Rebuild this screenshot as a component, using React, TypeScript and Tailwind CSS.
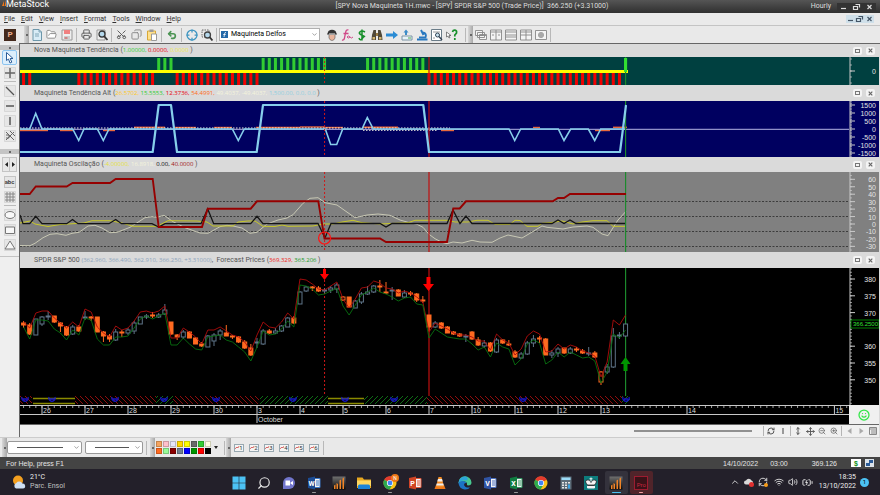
import type { ReactNode } from "react";
import {
  BatteryCharging,
  ChevronDown,
  ChevronUp,
  Copy,
  Crosshair,
  FolderOpen,
  Move,
  MoveVertical,
  Printer,
  RefreshCw,
  Scissors,
  Search,
  Smile,
  Undo2,
  Volume2,
  Wifi,
  ZoomIn,
  ZoomOut,
} from "lucide-react";

const BAR = 43 / 7;
const FIRST = -3;
const barX = (i: number) => 42 + i * BAR;

const DASHED_X = barX(46);
const CROSS_X = barX(63);
const LAST_X = barX(95);

function range(from: number, to: number): number[] {
  return Array.from({ length: to - from + 1 }, (_, k) => from + k);
}

const GREEN_BARS = [...range(19, 21), ...range(36, 46), ...range(53, 62), 95];
const RED_BARS = [-3, -2, ...range(6, 18), ...range(22, 35), ...range(63, 94)];

const TREND =
  "20,152 152.7,152 158.7,105 171,105 177,152 256.7,152 263,105 423.3,105 429,152 620,152 626,105";

const SPIKES =
  "20,129 29.7,129 35.7,113.5 42,129 72.7,129 78.7,140.5 84,129 97.3,129 103.3,140.5 109,129 232.3,129 238.3,140.5 244.3,129 325.3,129 330.7,144.5 336.7,144.5 342.7,129 362,129 367.3,117.5 373.3,129 509,129 514.7,140.5 520.7,129 558.3,129 564,140.5 570.7,129 588.3,129 594.7,140.5 600.7,129 626,129";

// x1, x2, y
const ORANGE_RUNS: [number, number, number][] = [
  [20, 48, 130.5],
  [60, 73, 130.5],
  [103, 115, 130.5],
  [134, 165, 127.3],
  [174, 196, 127.5],
  [214, 232, 127.5],
  [256, 300, 127.5],
  [300, 325, 127],
  [325, 343, 127.5],
  [363, 398, 127.3],
  [441, 454, 130.5],
  [533, 540, 127.5],
  [595, 610, 130.5],
  [613, 627, 127.3],
];

const OSC_RED =
  "20,194 29.7,194 35.8,186.5 66.7,186.5 72.5,183 110,183 115.7,179 152.7,179 158.7,227 202,227 207.7,208.7 250.7,208.7 257,201.3 318.3,201.3 324.5,238.5 380,238.5 386,242 447,242 453.3,208.5 459.7,208.5 466,201.3 552.7,201.3 558,198 564,198 570,194 626,194";

const OSC_BLACK =
  "20,215 23,223.7 29.7,223.7 35.8,216.3 42,223.7 66.7,223.7 72.5,219.5 78,223.7 109,223.7 115.7,219.5 121.5,223.7 152,223.7 158.7,227 165,223.7 201,223.7 207.7,209 213.7,223.7 250.7,223.7 257,216.3 263,223.7 318,223.5 325,238 331,223.5 380,223.5 386,227 392,223.5 447,223.5 453,210 460,223.5 466,216 472,223.5 552,223.5 558,220 564,223.5 570,220 576,223.5 626,223.5";

const OSC_YELLOW =
  "20,223 30,221 35,224 48,226.5 60,224.5 84,223 92,220.7 110,220.7 122,223 133,226.3 157,226.3 168,220.7 197,221 207,222 213,226 233,226 238,222 248,221 255,221 263,226.3 275,226.5 282,225 288,226.3 313,226 323,224 333,224 342,222 353,220.3 362,222.7 380,224 408,222.7 415,220.3 447,220.3 455,222 468,222 477,220.3 488,220.3 495,224.3 510,224.3 515,220.3 520,220.5 527,226.3 538,226.3 542,223.3 553,222.3 562,221 573,224 582,222 593,220.7 607,220.7 613,226.3 626,226.3";

const OSC_CREAM =
  "20,245.5 30,245.7 35,243.3 43,237.7 50,234.3 57,233.7 66,235.3 72,233.3 79,232.3 88,226 95,225.3 102,228 110,232.7 117,232.3 130,227.3 145,217.7 152,216.7 157,217.3 164,215.3 173,221.7 185,227.7 200,233 208,233.3 220,226.7 227,225.3 233,226 242,228 250,233.3 257,232.3 267,224 278,220 287,218 293,214.7 303,203.3 310,198.3 318,197.7 325,202.7 337,205 345,210.7 355,217.7 367,215 378,214 390,215.3 400,220 408,222.3 417,224.3 423,227.3 429,234.3 435,238.7 442,242.3 447,243.7 453,242 462,243 472,240.3 480,242 492,242.3 500,238 508,235 522,238 530,233.3 542,226 547,227.3 563,229 573,227 587,226 593,227.3 602,234 608,235.7 618,220 626,211.3";

type Kind = "d" | "u" | "x";
// high, top, bottom, low, kind (d = down, u = up, x = hollow down)
type Candle = [number, number, number, number, Kind];

const CANDLES: Candle[] = [
  [321, 323, 325, 328, "d"],
  [323, 325, 334, 335, "d"],
  [319, 319, 335, 335, "u"],
  [316, 317, 324, 326, "u"],
  [311, 316, 317, 320, "u"],
  [316, 316, 322, 323, "d"],
  [322, 323, 326, 332, "d"],
  [326, 327, 335, 336, "d"],
  [325, 327, 334, 335, "u"],
  [325, 327, 331, 332, "d"],
  [311, 317, 318, 320, "u"],
  [316, 317, 318, 321, "d"],
  [317, 317, 332, 332, "d"],
  [331, 332, 336, 342, "d"],
  [334, 336, 339, 342, "d"],
  [329, 332, 340, 341, "u"],
  [330, 332, 333, 337, "d"],
  [328, 330, 333, 335, "u"],
  [321, 323, 331, 334, "u"],
  [317, 317, 324, 324, "u"],
  [314, 316, 317, 319, "u"],
  [312, 315, 316, 318, "d"],
  [313, 315, 317, 318, "u"],
  [304, 310, 314, 315, "u"],
  [322, 322, 334, 335, "d"],
  [334, 335, 337, 340, "d"],
  [330, 332, 337, 339, "u"],
  [331, 332, 338, 338, "d"],
  [337, 338, 344, 344, "d"],
  [342, 344, 346, 347, "d"],
  [335, 336, 347, 347, "u"],
  [333, 335, 341, 346, "u"],
  [329, 331, 335, 340, "u"],
  [325, 333, 336, 336, "d"],
  [335, 336, 337, 339, "d"],
  [336, 337, 342, 343, "d"],
  [340, 342, 348, 349, "d"],
  [344, 348, 355, 356, "d"],
  [338, 342, 343, 348, "u"],
  [329, 331, 344, 345, "u"],
  [329, 331, 333, 334, "d"],
  [328, 331, 333, 334, "u"],
  [325, 326, 331, 332, "u"],
  [317, 318, 327, 327, "u"],
  [316, 318, 323, 324, "d"],
  [291, 292, 304, 304, "u"],
  [286, 287, 291, 292, "u"],
  [286, 287, 288, 291, "d"],
  [286, 288, 291, 292, "d"],
  [288, 290, 291, 293, "u"],
  [286, 288, 290, 293, "u"],
  [283, 285, 289, 293, "u"],
  [296, 297, 300, 301, "x"],
  [297, 297, 307, 308, "d"],
  [300, 301, 308, 308, "u"],
  [292, 294, 302, 304, "u"],
  [286, 292, 294, 295, "u"],
  [285, 286, 292, 293, "u"],
  [280, 286, 287, 292, "d"],
  [282, 292, 293, 294, "x"],
  [287, 290, 291, 300, "u"],
  [289, 290, 296, 296, "d"],
  [290, 293, 297, 298, "u"],
  [291, 293, 294, 296, "d"],
  [293, 294, 300, 302, "d"],
  [296, 300, 301, 303, "d"],
  [315, 315, 327, 331, "d"],
  [321, 323, 327, 328, "u"],
  [322, 323, 328, 329, "d"],
  [326, 327, 333, 333, "d"],
  [331, 332, 334, 335, "d"],
  [333, 334, 336, 337, "d"],
  [334, 336, 337, 342, "u"],
  [331, 332, 339, 340, "d"],
  [337, 340, 345, 346, "d"],
  [340, 343, 346, 348, "u"],
  [342, 343, 351, 352, "d"],
  [338, 340, 352, 353, "u"],
  [339, 340, 343, 344, "d"],
  [340, 344, 345, 346, "d"],
  [350, 352, 357, 358, "d"],
  [352, 354, 358, 359, "u"],
  [341, 343, 354, 355, "u"],
  [335, 339, 343, 347, "u"],
  [336, 338, 339, 343, "d"],
  [338, 339, 355, 355, "d"],
  [350, 353, 355, 358, "u"],
  [347, 349, 353, 357, "u"],
  [348, 348, 353, 354, "d"],
  [347, 349, 353, 354, "u"],
  [347, 349, 350, 352, "d"],
  [349, 351, 353, 354, "d"],
  [347, 353, 354, 356, "u"],
  [351, 353, 357, 358, "d"],
  [371, 372, 382, 385, "x"],
  [364, 367, 372, 374, "u"],
  [328, 336, 367, 368, "u"],
  [332, 335, 336, 339, "u"],
  [324, 324, 336, 337, "u"],
];

const FORECAST_HIGH = [
  322, 328, 313, 311, 311, 318, 323, 328, 322, 327, 309, 312, 327, 333, 337, 326, 330, 328, 321, 312,
  311, 313, 311, 306, 338, 338, 328, 332, 337, 344, 330, 330, 327, 331, 335, 337, 342, 351, 335, 322,
  327, 328, 322, 313, 319, 279, 280, 284, 289, 290, 286, 282, 299, 308, 299, 288, 287, 281, 283, 288,
  289, 293, 291, 293, 297, 302, 332, 323, 326, 329, 333, 335, 335, 337, 341, 341, 350, 334, 340, 343,
  355, 349, 336, 331, 334, 352, 351, 344, 349, 345, 347, 351, 353, 356, 377, 362, 320, 325, 315,
];

const FORECAST_LOW = [
  327, 339, 320, 320, 321, 329, 333, 340, 330, 335, 318, 320, 339, 345, 345, 337, 337, 336, 328, 319,
  316, 319, 316, 313, 345, 345, 338, 344, 349, 350, 337, 336, 335, 340, 342, 347, 352, 361, 347, 331,
  335, 334, 329, 321, 327, 285, 286, 289, 295, 294, 291, 288, 306, 315, 305, 295, 292, 288, 292, 294,
  297, 301, 298, 297, 304, 305, 338, 329, 333, 337, 338, 339, 339, 344, 350, 347, 357, 343, 347, 349,
  365, 359, 344, 340, 343, 364, 360, 352, 357, 352, 355, 358, 357, 361, 383, 372, 334, 338, 330,
];

const toPoints = (ys: number[]) => ys.map((y, k) => `${barX(k + FIRST)},${y}`).join(" ");

// start, end, kind
const RIBBON: [number, number, "red" | "green" | "flat"][] = [
  [20, 32, "red"],
  [33, 75, "flat"],
  [75, 156, "red"],
  [156, 173, "green"],
  [173, 259, "red"],
  [260, 328, "green"],
  [328, 364, "flat"],
  [364, 427, "green"],
  [427, 622, "red"],
  [622, 630, "green"],
];

const EXPERT_MARKS = [25, 52, 115, 164, 216, 293, 345, 394, 523, 626];

const DAYS: [number, string][] = [
  [0, "26"],
  [7, "27"],
  [14, "28"],
  [21, "29"],
  [28, "30"],
  [35, "3"],
  [42, "4"],
  [49, "5"],
  [56, "6"],
  [63, "7"],
  [70, "10"],
  [77, "11"],
  [84, "12"],
  [91, "13"],
  [105, "14"],
  [129, "15"],
];

interface PlotProps {
  top: number;
  className: string;
  label: string;
  children: ReactNode;
}

const Plot = ({ top, className, label, children }: PlotProps) => (
  <svg role="img" aria-label={label} className={`block min-w-0 flex-1 ${className}`}>
    <g transform={`translate(-20 ${-top})`}>{children}</g>
  </svg>
);

const Cursors = ({ y1, y2 }: { y1: number; y2: number }) => (
  <g>
    <line x1={DASHED_X} x2={DASHED_X} y1={y1} y2={y2} stroke="#d01818" strokeDasharray="2 2" />
    <line x1={CROSS_X} x2={CROSS_X} y1={y1} y2={y2} stroke="#c01010" strokeWidth="1.2" />
    <line x1={LAST_X} x2={LAST_X} y1={y1} y2={y2} stroke="#1c8a2c" strokeWidth="1.2" />
  </g>
);

interface ScaleProps {
  top: number;
  height: number;
  className: string;
  marks: [number, string][];
  minor: number;
  children?: ReactNode;
}

const Scale = ({ top, height, className, marks, minor, children }: ScaleProps) => {
  const count = Math.floor(height / minor);
  const start = marks[0][0] - Math.floor((marks[0][0] - top) / minor) * minor;
  return (
    <svg aria-hidden="true" className={`block w-[30px] shrink-0 ${className}`}>
      <g transform={`translate(0 ${-top})`} stroke="#c8c8c8">
        <line x1="1" x2="1" y1={top} y2={top + height} />
        {range(0, count).map((k) => (
          <line key={k} x1="1" x2="3" y1={start + k * minor} y2={start + k * minor} strokeWidth="0.7" />
        ))}
        {marks.map(([y]) => (
          <line key={y} x1="1" x2="6" y1={y} y2={y} />
        ))}
        {marks.map(([y, text]) => (
          <text
            key={y}
            x="27"
            y={y + 3}
            textAnchor="end"
            stroke="none"
            fill="#e4e4e4"
            className="font-['Liberation_Sans'] text-[7px]"
          >
            {text}
          </text>
        ))}
        {children}
      </g>
    </svg>
  );
};

const CloseGlyph = () => (
  <svg viewBox="0 0 5 5" className="h-[5px] w-[5px]">
    <path d="M.7 .7 4.3 4.3M4.3 .7 .7 4.3" stroke="#666" strokeWidth="1.2" />
  </svg>
);

const PaneHeader = ({ className = "h-[13px]", children }: { className?: string; children: ReactNode }) => (
  <div className={`flex items-center bg-[#dadada] pl-3.5 pr-1 text-[7px] leading-none text-[#555] ${className}`}>
    <h2 className="whitespace-pre">{children}</h2>
    <div className="ml-auto flex gap-1">
      <button aria-label="Maximize pane" className="flex h-2 w-[9px] items-center justify-center rounded-xs bg-[#f4f4f4]">
        <span className="h-1 w-[5px] border border-[#777]" />
      </button>
      <button aria-label="Close pane" className="flex h-2 w-[9px] items-center justify-center rounded-xs bg-[#f4f4f4]">
        <CloseGlyph />
      </button>
    </div>
  </div>
);

const Value = ({ className, children }: { className: string; children: ReactNode }) => (
  <span className={`font-[Open_Sans,Noto_Sans,sans-serif] text-[6px] font-medium ${className}`}>{children}</span>
);

const Candlesticks = () => (
  <g>
    {CANDLES.map(([high, top, bottom, low, kind], k) => {
      const x = barX(k + FIRST);
      const color = kind === "u" ? "#5f7488" : "#ff6a20";
      return (
        <g key={k} stroke={color}>
          <line x1={x} x2={x} y1={high} y2={top} />
          <line x1={x} x2={x} y1={bottom} y2={low} />
          <rect x={x - 2} y={top} width="4" height={bottom - top} fill={kind === "d" ? "#ff6a20" : "#000"} />
        </g>
      );
    })}
  </g>
);

const Ribbon = () => (
  <g>
    <defs>
      <pattern id="hatchRed" width="5" height="8" patternUnits="userSpaceOnUse" y="396">
        <path d="M-5 0 3 8M0 0 8 8M-10 0-2 8M5 0 13 8" stroke="#a01010" strokeWidth="0.9" />
      </pattern>
      <pattern id="hatchGreen" width="5" height="8" patternUnits="userSpaceOnUse" y="396">
        <path d="M3 0-5 8M8 0 0 8M13 0 5 8" stroke="#107818" strokeWidth="0.9" />
      </pattern>
    </defs>
    {RIBBON.map(([a, b, kind]) =>
      kind === "flat" ? (
        <path key={a} d={`M${a} 398.5H${b}M${a} 403.5H${b}`} stroke="#8a8a00" strokeWidth="1.4" />
      ) : (
        <rect
          key={a}
          x={a}
          y="396"
          width={b - a}
          height="8"
          fill={kind === "red" ? "url(#hatchRed)" : "url(#hatchGreen)"}
        />
      )
    )}
    {EXPERT_MARKS.map((x) => (
      <path key={x} d={`M${x - 3} 397a3.2 3.2 0 1 0 6 0M${x - 2} 399h4`} fill="none" stroke="#1414c8" strokeWidth="1.3" />
    ))}
  </g>
);

const TimeAxis = () => (
  <svg role="img" aria-label="Time axis" className="block h-[19px] min-w-0 flex-1 bg-black">
    <line x1="0" x2="100%" y1="0.5" y2="0.5" stroke="#c8c8c8" />
    <line x1="0" x2="100%" y1="9.5" y2="9.5" stroke="#c8c8c8" />
    <g
      transform="translate(-20 -405)"
      stroke="#c8c8c8"
      className="font-['Liberation_Sans'] text-[7px]"
    >
      {range(-3, 131).map((i) => (
        <line key={i} x1={barX(i)} x2={barX(i)} y1="406" y2="408" strokeWidth="0.8" />
      ))}
      {DAYS.map(([i, text]) => (
        <g key={text}>
          <line x1={barX(i)} x2={barX(i)} y1="405" y2="414" />
          <text x={barX(i) + 1} y="412.5" stroke="none" fill="#dcdcdc">
            {text}
          </text>
        </g>
      ))}
      <line x1={barX(35)} x2={barX(35)} y1="414" y2="423" />
      <text x={barX(35) + 1} y="422" stroke="none" fill="#dcdcdc">
        October
      </text>
    </g>
  </svg>
);

const TREND_MARKS: [number, string][] = [
  [105, "1500"],
  [113, "1000"],
  [121, "500"],
  [129, "0"],
  [137, "-500"],
  [145, "-1000"],
  [153, "-1500"],
];

const OSC_MARKS: [number, string][] = range(0, 9).map((k) => [179.3 + k * 7.45, String(60 - k * 10)]);

const PRICE_MARKS: [number, string][] = [
  [279, "380"],
  [295.8, "375"],
  [312.6, "370"],
  [346.2, "360"],
  [363, "355"],
  [379.8, "350"],
];

const MiniButton = ({ label, children }: { label: string; children: ReactNode }) => (
  <button aria-label={label} className="flex h-3 w-3 shrink-0 items-center justify-center">
    {children}
  </button>
);

const Divider = () => <span className="mx-px h-2.5 w-px shrink-0 bg-[#b4b4b4]" />;

const Charts = () => (
  <main className="flex min-w-0 flex-1 flex-col border-l border-t border-[#666] bg-[#dadada] pr-px">
    <section>
      <PaneHeader>
        Nova Maquineta Tendência (<Value className="text-[#32cd32]">1.00000, </Value>
        <Value className="text-red-600">0.0000, </Value>
        <Value className="text-[#f0ea50]">0.0000 </Value>)
      </PaneHeader>
      <div className="flex">
        <Plot top={57} className="h-7 bg-[#004040]" label="Nova Maquineta Tendência">
          {GREEN_BARS.map((i) => (
            <rect key={i} x={barX(i) - 1.5} y="58" width="3" height="12" fill="#32cd32" />
          ))}
          {RED_BARS.map((i) => (
            <rect key={i} x={barX(i) - 1.5} y="73" width="3" height="12" fill="#f00000" />
          ))}
          <rect x="20" y="70" width="608" height="3" fill="#ffff00" />
          <Cursors y1={57} y2={85} />
          <rect x={LAST_X - 1.5} y="58" width="3" height="14" fill="#32e032" />
        </Plot>
        <Scale top={57} height={28} minor={6} className="h-7 bg-[#004040]" marks={[[71, "0"]]} />
      </div>
    </section>

    <section>
      <PaneHeader className="h-4">
        Maquineta Tendência Alt (<Value className="text-[#ffc81e]">26.5702, </Value>
        <Value className="text-[#32cd32]">15.5553, </Value>
        <Value className="text-red-600">12.3736, </Value>
        <Value className="text-[#ff6a20]">54.4991, </Value>
        <Value className="text-[#f4f4dc]">49.4037, -49.4037, </Value>
        <Value className="text-[#90cfe0]">1,500.00, 0.0, 0.0 </Value>)
      </PaneHeader>
      <div className="flex">
        <Plot top={101} className="h-14 bg-[#000060]" label="Maquineta Tendência Alt">
          {ORANGE_RUNS.map(([a, b, y]) => (
            <line key={a} x1={a} x2={b} y1={y} y2={y} stroke="#e8683c" strokeWidth="1.4" />
          ))}
          <line x1="20" x2="4000" y1="129.3" y2="129.3" stroke="#b4b4e4" />
          <line x1="20" x2="450" y1="128" y2="128" stroke="#f0f0e0" strokeDasharray="1.5 1.5" />
          <line x1="363" x2="438" y1="130.3" y2="130.3" stroke="#f0f0e0" strokeDasharray="1.5 1.5" />
          <polyline points={SPIKES} fill="none" stroke="#87ceeb" strokeWidth="1.6" />
          <Cursors y1={101} y2={157} />
          <polyline points={TREND} fill="none" stroke="#87ceeb" strokeWidth="2.2" strokeLinejoin="round" />
        </Plot>
        <Scale top={101} height={56} minor={1.6} className="h-14 bg-[#000060]" marks={TREND_MARKS} />
      </div>
    </section>

    <section>
      <PaneHeader className="h-[15px]">
        Maquineta Oscilação (<Value className="text-[#e6e23c]">-4.00000, </Value>
        <Value className="text-[#f4f4dc]">16.8918, </Value>
        <Value className="text-black">0.00, </Value>
        <Value className="text-[#a01414]">40.0000 </Value>)
      </PaneHeader>
      <div className="flex">
        <Plot top={172} className="h-20 bg-[#808080]" label="Maquineta Oscilação">
          {[201.5, 216.5, 231.5, 246.5].map((y) => (
            <line key={y} x1="20" x2="4000" y1={y} y2={y} stroke="#3c3c3c" strokeDasharray="2 1.5" />
          ))}
          <polyline points={OSC_CREAM} fill="none" stroke="#c8c8b4" />
          <polyline points={OSC_YELLOW} fill="none" stroke="#c8c828" />
          <polyline points={OSC_BLACK} fill="none" stroke="#141414" strokeWidth="1.3" />
          <Cursors y1={172} y2={252} />
          <polyline points={OSC_RED} fill="none" stroke="#960000" strokeWidth="1.9" />
          <circle cx={DASHED_X} cy="238" r="6" fill="none" stroke="#ff1414" strokeWidth="1.2" />
        </Plot>
        <Scale top={172} height={80} minor={3.725} className="h-20 bg-[#808080]" marks={OSC_MARKS} />
      </div>
    </section>

    <section>
      <PaneHeader className="h-4">
        SPDR S&amp;P 500 <Value className="text-[#8ca4bc]">(362.960, 366.490, 362.910, 366.250, +3.31000)</Value>,
        {"  "}Forecast Prices (<Value className="text-[#f02020]">369.329, </Value>
        <Value className="text-[#209828]">365.206 </Value>)
      </PaneHeader>
      <div className="flex">
        <Plot top={268} className="h-[137px] bg-black" label="SPDR S&P 500">
          <Cursors y1={268} y2={396} />
          <Candlesticks />
          <polyline points={toPoints(FORECAST_HIGH)} fill="none" stroke="#b00c0c" strokeWidth="0.9" />
          <polyline points={toPoints(FORECAST_LOW)} fill="none" stroke="#087010" strokeWidth="0.9" />
          <path d="M323 269h3v5h3l-4.500 6-4.500-6h3z" fill="#ff0000" />
          <path d="M426.500 277h4v7h3.500l-5.500 7-5.500-7h3.500z" fill="#ff0000" />
          <path d="M623.500 371h4v-7h3l-5-7-5 7h3z" fill="#009600" />
          <Ribbon />
        </Plot>
        <Scale top={268} height={137} minor={3.36} className="h-[137px] bg-black" marks={PRICE_MARKS}>
          <rect x="2" y="320" width="28" height="8" fill="#000" stroke="#00a000" strokeWidth="0.8" />
          <text
            x="4"
            y="326"
            stroke="none"
            fill="#30e030"
            className="font-['Liberation_Sans'] text-[6px]"
          >
            366.2500
          </text>
        </Scale>
      </div>
      <div className="flex border-b border-[#666] bg-black">
        <TimeAxis />
        <div className="flex w-[30px] items-center justify-center bg-[#f0f0f0] text-[#32e646]">
          <Smile size={12} strokeWidth={2.5} />
        </div>
      </div>
    </section>

    <div className="flex h-3 items-center bg-[#f0f0f0] text-[#555]">
      <div className="ml-auto mr-2.5 h-0.5 w-[118px] bg-[#909090]" />
      <Divider />
      <MiniButton label="Refresh"><RefreshCw size={8} strokeWidth={3} /></MiniButton>
      <MiniButton label="Bar width"><span className="h-1.5 w-0.5 bg-[#999]" /></MiniButton>
      <Divider />
      <MiniButton label="Stretch"><MoveVertical size={8} strokeWidth={3} /></MiniButton>
      <MiniButton label="Move"><Move size={9} strokeWidth={2.5} /></MiniButton>
      <MiniButton label="Zoom out"><ZoomOut size={8} /></MiniButton>
      <MiniButton label="Zoom in"><ZoomIn size={8} /></MiniButton>
      <Divider />
      <MiniButton label="Previous">
        <svg viewBox="0 0 5 6" className="h-1.5 w-[5px]"><path d="M4.500 0v6L.5 3z" fill="#aaa" /></svg>
      </MiniButton>
      <MiniButton label="Next">
        <svg viewBox="0 0 5 6" className="h-1.5 w-[5px]"><path d="M.5 0v6l4-3z" fill="#aaa" /></svg>
      </MiniButton>
      <MiniButton label="Data window">
        <svg viewBox="0 0 8 8" className="size-2"><path d="M.5.5h7v7h-7zM0 2h8M2 4h5M2 6h5" fill="none" stroke="#888" /></svg>
      </MiniButton>
    </div>
  </main>
);

const Grip = () => (
  <span className="flex h-full w-[5px] shrink-0 items-center justify-center bg-linear-to-r from-[#d8d8d8] to-[#a8a8a8]">
    <span className="size-0.5 bg-[#666]" />
  </span>
);

const ToolButton = ({ label, children }: { label: string; children: ReactNode }) => (
  <button aria-label={label} title={label} className="flex h-4 w-[15px] shrink-0 items-center justify-center text-[#555]">
    {children}
  </button>
);

const Sep = () => <span className="mx-0.5 h-3.5 w-px shrink-0 bg-[#b8b8b8]" />;

const icon = "size-3 shrink-0";

const DocIcon = () => (
  <svg viewBox="0 0 12 12" className={icon}>
    <path d="M2 .5h6l2.500 2.500v8.500H2z" fill="#d8ecf6" stroke="#6d97aa" />
    <path d="M8 .5V3h2.500M4 5h4M4 7h4" fill="none" stroke="#6d97aa" strokeWidth=".8" />
  </svg>
);

const SaveIcon = () => (
  <svg viewBox="0 0 12 12" className={icon}>
    <path d="M1 1h10v10H1z" fill="#eee" stroke="#999" />
    <path d="M3 1h6v4H3z" fill="#f08080" />
    <path d="M3 7h6v4H3z" fill="#ccc" />
    <path d="M3.500 9h3" stroke="#d04040" />
  </svg>
);

const PreviewIcon = () => (
  <svg viewBox="0 0 12 12" className={icon}>
    <path d="M1 1h8v10H1z" fill="#eee" stroke="#999" />
    <circle cx="6" cy="5" r="3" fill="#b4d8ec" stroke="#333" strokeWidth="1.3" />
    <path d="m8 7 3.500 4" stroke="#333" strokeWidth="1.8" />
  </svg>
);

const PasteIcon = () => (
  <svg viewBox="0 0 12 12" className={icon}>
    <path d="M1.500 2h8v9h-8z" fill="#ffe08c" stroke="#d8a838" />
    <path d="M3.500 .5h4v2.500h-4z" fill="#999" />
    <path d="M5.500 5h5v6.500h-5z" fill="#fff" stroke="#999" />
  </svg>
);

const ZoomBoxIcon = () => (
  <svg viewBox="0 0 12 12" className={icon}>
    <path d="M1 1h7v7H1z" fill="none" stroke="#666" strokeDasharray="1.5 1" />
    <circle cx="6.500" cy="6" r="3" fill="#b4d8ec" stroke="#444" strokeWidth="1.3" />
    <path d="m8.500 8 3 3.500" stroke="#333" strokeWidth="1.8" />
  </svg>
);

const ExpertIcon = () => (
  <svg viewBox="0 0 12 12" className={icon}>
    <path d="M3 5.500h6v3.500q-1 2.500-3 2.500t-3-2.500z" fill="#e8b49c" stroke="#555" strokeWidth=".6" />
    <path d="M1 5.500 2.500 2Q6-.5 9.500 2L11 5.500z" fill="#333" />
    <path d="M3 5h6" stroke="#eee" />
  </svg>
);

const FxIcon = () => (
  <svg viewBox="0 0 12 12" className={icon}>
    <path d="M7.500 1Q5 0 4.500 4L3.500 9Q3 11.500 1 11M2.500 4.500h5" fill="none" stroke="#d04888" strokeWidth="1.3" />
    <path d="M6 8q1.500-2 3 0t3 0M6 8q1.500 2 3 0" fill="none" stroke="#d04888" />
  </svg>
);

const DollarIcon = () => (
  <svg viewBox="0 0 12 12" className={icon}>
    <path d="M9 3Q6 1.200 4 2.800T5.500 6 8.500 7.500 6 9.800 3 9M6 .5v11" fill="none" stroke="#18902c" strokeWidth="1.5" />
  </svg>
);

const BinocularsIcon = () => (
  <svg viewBox="0 0 12 12" className={icon}>
    <path d="M1 6 2.500 1h2.500v10H.5zM11 6 9.500 1H7v10h4.500z" fill="#504838" />
    <path d="M5 4h2v3H5z" fill="#98783c" />
    <path d="M1.500 8h2.500v2.500H1.500zM8 8h2.500v2.500H8z" fill="#d4b46c" />
  </svg>
);

const ArrowIcon = () => (
  <svg viewBox="0 0 12 12" className={icon}>
    <path d="M0 4.500h7V2l5 4-5 4V7.500H0z" fill="#2c8cd4" />
  </svg>
);

const DownloadIcon = () => (
  <svg viewBox="0 0 12 12" className={icon}>
    <path d="M1 7h10v4H1z" fill="#e8f2f8" stroke="#7a94a4" />
    <path d="M4 6V3.500H2.500L5 .5l2.500 3H6V6z" fill="#3c8cc8" />
    <path d="M7 9h3" stroke="#52b04c" />
  </svg>
);

const MicroscopeIcon = () => (
  <svg viewBox="0 0 12 12" className={icon}>
    <path d="M5 1 7.500 6M7 3.500q4 1 2.500 5H3" fill="none" stroke="#2878c0" strokeWidth="1.900" />
    <path d="M1 10.500h10.500" stroke="#2878c0" strokeWidth="2" />
  </svg>
);

const ReportIcon = () => (
  <svg viewBox="0 0 12 12" className={icon}>
    <path d="M.5 .5h10v11H.5z" fill="#fff" stroke="#6a7c88" />
    <path d="M2 3h7M2 9h2" stroke="#999" />
    <circle cx="6.500" cy="6" r="2" fill="#cce4f0" stroke="#345" />
    <path d="m8 7.500 3 3.500" stroke="#345" strokeWidth="1.400" />
  </svg>
);

const HelpIcon = () => (
  <svg viewBox="0 0 12 12" className={icon}>
    <path d="M.5 3v5l1.500-1 1 2 1-.5-1-2h2z" fill="#fff" stroke="#555" strokeWidth=".7" />
    <path d="M6.500 3Q7 1 9 1.200T10.500 4L8.800 6v1.500M8.800 9v2" fill="none" stroke="#18902c" strokeWidth="1.700" />
  </svg>
);

const WINDOW_ICONS: [string, string][] = [
  ["Cascade", "M.5 1.500h7v5h-7zM2.500 3.500h7v5h-7zM4.500 5.500h7v5h-7zM5 6.500h6"],
  ["Tile columns", "M.5 1h11v10H.5zM6 1v10M.5 3h11M2 6h2M8 6h2"],
  ["Tile rows", "M.5 1h11v10H.5zM.5 6h11M.5 3h11M.5 8h11"],
  ["Tile grid", "M.5 1h11v10H.5zM6 1v10M.5 6h11M.5 3h11"],
  ["Arrange", "M.5 1.500h11v9H.5zM4 4h4v4H4zM6 3v6M3 6h6"],
];

const Toolbar = () => (
  <div className="flex h-[18px] items-center border-t border-[#c4c4c4] bg-[#e9e9e9] pl-1">
    <button aria-label="Power Console" className="mr-2 flex size-3 items-center justify-center bg-[#44291c] text-[8px] font-bold leading-none text-[#f0b090]">
      P
    </button>
    <Grip />
    <ToolButton label="New"><DocIcon /></ToolButton>
    <ToolButton label="Open"><FolderOpen size={11} fill="#fff" stroke="#888" /></ToolButton>
    <ToolButton label="Save"><SaveIcon /></ToolButton>
    <Sep />
    <ToolButton label="Print"><Printer size={11} /></ToolButton>
    <ToolButton label="Print preview"><PreviewIcon /></ToolButton>
    <Sep />
    <ToolButton label="Cut"><Scissors size={11} className="rotate-270" /></ToolButton>
    <ToolButton label="Copy"><Copy size={11} stroke="#888" className="-scale-x-100" /></ToolButton>
    <ToolButton label="Paste"><PasteIcon /></ToolButton>
    <Sep />
    <ToolButton label="Undo"><Undo2 size={10} stroke="#4c9454" strokeWidth={4} /></ToolButton>
    <Sep />
    <ToolButton label="Crosshair"><Crosshair size={12} stroke="#3c94c0" strokeWidth={2.5} /></ToolButton>
    <ToolButton label="Zoom box"><ZoomBoxIcon /></ToolButton>
    <Sep />
    <div className="relative mr-1 h-[13px] w-[101px] shrink-0">
      <select
        aria-label="Template"
        className="block h-[13px] w-full appearance-none border border-[#b0b0b0] bg-white pl-[11px] text-[7px] leading-[11px] text-black"
      >
        <option>Maquineta Delfos</option>
      </select>
      <svg viewBox="0 0 7 7" className="pointer-events-none absolute left-0.5 top-[3px] size-[7px]">
        <path d="M0 0h7v7H0z" fill="#2468a8" />
        <path d="M5 1.500Q3.800 1 3.500 3L3 6M2.200 3.500h2.500" fill="none" stroke="#fff" strokeWidth=".8" />
      </svg>
      <ChevronDown size={7} className="pointer-events-none absolute right-0.5 top-[3px] text-[#666]" />
    </div>
    <ToolButton label="Expert Advisor"><ExpertIcon /></ToolButton>
    <ToolButton label="Indicator Builder"><FxIcon /></ToolButton>
    <ToolButton label="System Tester"><DollarIcon /></ToolButton>
    <ToolButton label="Explorer"><BinocularsIcon /></ToolButton>
    <ToolButton label="Forecaster"><ArrowIcon /></ToolButton>
    <ToolButton label="Downloader"><DownloadIcon /></ToolButton>
    <ToolButton label="Research"><MicroscopeIcon /></ToolButton>
    <ToolButton label="Reports"><ReportIcon /></ToolButton>
    <ToolButton label="Context help"><HelpIcon /></ToolButton>
    <div className="ml-1 flex h-full items-center">
      <Sep />
      <Grip />
      {WINDOW_ICONS.map(([label, d]) => (
        <ToolButton key={label} label={label}>
          <svg viewBox="0 0 12 12" className={icon}>
            <path d={d} fill="#f4f4f4" stroke="#888" strokeWidth="0.9" />
          </svg>
        </ToolButton>
      ))}
      <Sep />
    </div>
  </div>
);

const SideButton = ({ label, active, children }: { label: string; active?: boolean; children: ReactNode }) => (
  <button
    aria-label={label}
    className={
      active
        ? "flex size-[15px] items-center justify-center rounded-xs border border-[#8cc4f0] bg-[#dceefc]"
        : "flex size-[15px] items-center justify-center"
    }
  >
    <svg viewBox="0 0 12 12" className="size-3">
      {!active && <path d="M.5 .5h11v11H.5z" fill="#e6e6e6" stroke="#cfcfcf" strokeWidth=".7" />}
      {children}
    </svg>
  </button>
);

const SideBar = () => (
  <aside className="flex w-[19px] shrink-0 flex-col items-center bg-[#efefef]">
    <span className="mt-0.5 flex h-[5px] w-full shrink-0 items-center justify-center bg-[#c4c4c4]">
      <span className="size-0.5 bg-[#666]" />
    </span>
    <SideButton label="Pointer" active>
      <path d="M2.500 .5v8l2-1.500 1.500 4 1.800-.8L6.200 6.500H9z" fill="#fff" stroke="#2c5c98" />
    </SideButton>
    <SideButton label="Crosshair"><path d="M6 1v10M1 6h10" stroke="#666" strokeWidth="1.500" /></SideButton>
    <span className="my-px h-px w-3 bg-[#bbb]" />
    <SideButton label="Trendline"><path d="m2 2 8 8" stroke="#555" strokeWidth="1.200" /></SideButton>
    <SideButton label="Horizontal line"><path d="M2 6h8" stroke="#555" strokeWidth="1.500" /></SideButton>
    <SideButton label="Vertical line"><path d="M6 2v8" stroke="#555" strokeWidth="1.500" /></SideButton>
    <SideButton label="Line studies">
      <path d="m2 2 8 8M10 2 2 10M6 1l5 5M2 5h3v3H2" fill="none" stroke="#666" />
    </SideButton>
    <span className="mt-1.5 flex h-[5px] w-full shrink-0 items-center justify-center bg-[#c4c4c4]">
      <span className="size-0.5 bg-[#666]" />
    </span>
    <div className="mt-[3px] flex h-[15px] w-[15px] border border-[#c4c4c4] bg-[#e8e8e8]">
      <button aria-label="Scroll left" className="flex flex-1 items-center justify-center border-r border-[#c4c4c4]">
        <svg viewBox="0 0 3 5" className="h-[5px] w-[3px]"><path d="M3 0v5L0 2.500z" fill="#222" /></svg>
      </button>
      <button aria-label="Scroll right" className="flex flex-1 items-center justify-center">
        <svg viewBox="0 0 3 5" className="h-[5px] w-[3px]"><path d="M0 0v5l3-2.500z" fill="#222" /></svg>
      </button>
    </div>
    <button aria-label="Text" className="mb-px mt-1 flex size-3 items-center justify-center border border-[#c4c4c4] bg-[#e6e6e6] text-[6px] font-bold leading-none text-[#444]">
      abc
    </button>
    <SideButton label="Grid"><path d="M3 1v10M6 1v10M9 1v10M1 3h10M1 6h10M1 9h10" stroke="#888" /></SideButton>
    <span className="my-px h-px w-3 bg-[#bbb]" />
    <SideButton label="Ellipse"><ellipse cx="6" cy="6" rx="5" ry="3.500" fill="#f8f8f8" stroke="#777" /></SideButton>
    <SideButton label="Rectangle"><path d="M1.500 3h9v6.500h-9z" fill="#f8f8f8" stroke="#777" /></SideButton>
    <SideButton label="Triangle"><path d="M6 2 11 10H1z" fill="#f8f8f8" stroke="#777" /></SideButton>
    <span className="mt-1 h-px w-full bg-[#c4c4c4]" />
  </aside>
);

const PALETTE = [
  "bg-[#f4a460]",
  "bg-[#ffc0cb]",
  "bg-[#e6e6fa]",
  "bg-[#ffd700]",
  "bg-[#ffff00]",
  "bg-[#696969]",
  "bg-[#32cd32]",
  "bg-[#ffffe0]",
  "bg-[#ff6a20]",
  "bg-[#98fb98]",
  "bg-[#8b0000]",
  "bg-[#708090]",
  "bg-[#0000ff]",
  "bg-[#009600]",
  "bg-[#ff0000]",
  "bg-[#000000]",
];

const LineSelect = ({ label, className, line }: { label: string; className: string; line: string }) => (
  <div className={`relative h-[13px] shrink-0 ${className}`}>
    <select aria-label={label} className="block h-[13px] w-full appearance-none rounded-xs border border-[#999] bg-white" />
    <span className={`pointer-events-none absolute left-2.5 top-1.5 h-px bg-[#555] ${line}`} />
    <ChevronDown size={7} className="pointer-events-none absolute right-0.5 top-[3px] text-[#666]" />
  </div>
);

const FormatBar = () => (
  <div className="flex h-5 items-center border-t border-[#ccc] bg-[#e9e9e9] pl-0.5">
    <Grip />
    <LineSelect label="Line style" className="w-[75px]" line="w-[46px]" />
    <LineSelect label="Line weight" className="ml-[3px] w-[58px]" line="w-[34px]" />
    <span className="mx-[3px] h-3.5 w-px bg-[#b8b8b8]" />
    <Grip />
    <div className="ml-px grid grid-cols-8 gap-px">
      {PALETTE.map((color) => (
        <button key={color} aria-label="Color" className={`size-1.5 border border-black/20 ${color}`} />
      ))}
    </div>
    <button aria-label="More colors" className="flex w-2.5 justify-center">
      <svg viewBox="0 0 4 3" className="h-[3px] w-1"><path d="M0 0h4L2 3z" fill="#222" /></svg>
    </button>
    <span className="ml-[3px] mr-px h-3.5 w-px bg-[#b8b8b8]" />
    <Grip />
    {range(1, 6).map((n) => (
      <ToolButton key={n} label={`Chart style ${n}`}>
        <span className="flex h-2 w-2.5 items-center border border-[#98a8b0] bg-[#f4f4f4] text-[6px] leading-none text-[#333]">
          <svg viewBox="0 0 5 5" className="size-[5px]">
            <path d="m0 4 2-2 1 1 2-2.500" fill="none" stroke="#d04848" />
          </svg>
          {n}
        </span>
      </ToolButton>
    ))}
    <Sep />
  </div>
);

const StatusBar = () => (
  <footer className="flex h-3 items-center bg-[#444] px-1.5 font-['Liberation_Sans'] text-[7px] leading-none text-[#e4e4e4]">
    <span>For Help, press F1</span>
    <span className="ml-auto">14/10/2022</span>
    <span className="ml-3">03:00</span>
    <span className="ml-6 mr-3.5">369.126</span>
    <span className="flex h-2 w-2.5 items-center justify-center bg-white font-bold text-[#109020]">$</span>
    <svg viewBox="0 0 9 8" className="ml-1 h-2 w-[9px]">
      <path d="M0 0h9v8H0z" fill="#dde4ea" />
      <path d="M4 1h4v3H4zM1 4h4v3H1z" fill="#2c5c98" />
    </svg>
  </footer>
);

const Windows = () => (
  <svg viewBox="0 0 14 14" className="size-3.5">
    <path d="M.5.5h6.200v6.200H.5zM7.300.5h6.200v6.200H7.300zM.5 7.300h6.200v6.200H.5zM7.300 7.300h6.200v6.200H7.300z" fill="#4cc2f4" />
  </svg>
);

const Chat = () => (
  <svg viewBox="0 0 14 14" className="size-3.5">
    <path d="M1 13V7a6 6 0 1 1 6 6z" fill="#7276cc" />
    <path d="M3.500 4.500h4.500v5H3.500zM8.500 6.500l2.500-1.500v4L8.500 7.500z" fill="#fff" />
  </svg>
);

const Office = ({ letter, fill, dark }: { letter: string; fill: string; dark: string }) => (
  <svg viewBox="0 0 14 14" className="size-3.5">
    <path d="M6 2.500h7v9H6z" fill="#f4f4f4" stroke={fill} />
    <path d="M9 5h3M9 7h3M9 9h3" stroke={fill} />
    <path d="M1 2l7-1.500v13L1 12z" fill={dark} />
    <text x="4.500" y="9.500" textAnchor="middle" fill="#fff" className="text-[7px] font-bold">
      {letter}
    </text>
  </svg>
);

const Meta = () => (
  <svg viewBox="0 0 14 14" className="size-3.5">
    <defs>
      <linearGradient id="metaBg" x1="0" x2="0" y1="0" y2="1">
        <stop offset="0" stopColor="#707070" />
        <stop offset="1" stopColor="#080808" />
      </linearGradient>
    </defs>
    <path d="M.5.5h13v13H.5z" fill="url(#metaBg)" />
    <path d="M2 13V9.500l1.500-1V13zM4.500 13V7L6 8v5zM7.500 13V4.500L9 3.500V13zM10.500 13V2.500L12 1.500V13z" fill="#f08428" />
  </svg>
);

const Folder = () => (
  <svg viewBox="0 0 14 14" className="size-3.5">
    <path d="M0 1.500h5.500L7 3.500h7V12H0z" fill="#e8a820" />
    <path d="M0 4.500h14V10H0z" fill="#ffd860" />
    <path d="M1 13V10q0-1.500 1.500-1.500h9q1.500 0 1.500 1.500v3z" fill="#1c84d8" />
  </svg>
);

const Chrome = ({ badge }: { badge?: boolean }) => (
  <svg viewBox="0 0 14 14" className="size-3.5 overflow-visible">
    <circle cx="7" cy="7" r="6.500" fill="#fbc116" />
    <path d="M7 7 1.300 3.700A6.500 6.500 0 0 1 12.700 3.700z" fill="#e33b2e" />
    <path d="M7 7 1.300 3.700A6.500 6.500 0 0 0 6.500 13.500L10 8z" fill="#2da94f" />
    <circle cx="7" cy="7" r="3.100" fill="#fff" />
    <circle cx="7" cy="7" r="2.400" fill="#4285f4" />
    {badge && (
      <>
        <circle cx="12" cy="2" r="4" fill="#ee7818" />
        <text x="12" y="4" textAnchor="middle" fill="#fff" className="text-[5px]">
          N
        </text>
      </>
    )}
  </svg>
);

const Vlc = () => (
  <svg viewBox="0 0 14 14" className="size-3.5">
    <path d="M1.500 13 3 9h8l1.500 4z" fill="#f07818" />
    <path d="M5.500 1h3L11 10.500Q7 12.500 3 10.500z" fill="#f48c24" />
    <path d="M5 3h4l.7 2.500H4.300zM3.700 7.500h6.600l.5 2H3.200z" fill="#eee" />
  </svg>
);

const Edge = () => (
  <svg viewBox="0 0 14 14" className="size-3.5">
    <path d="M.5 7a6.500 6.500 0 0 1 13-.5Q13.500 9.500 10 9.500 8.500 9.300 9 8 9 5.500 6 5.500 2 5.500.5 7z" fill="#48c890" />
    <path d="M.5 7.500A6.500 6.500 0 0 1 8 .6Q11 2 9 4.500 3 3.500.5 7.500z" fill="#2ca4d8" />
    <path d="M.5 7Q2 4.500 5.500 5 8 5.500 8.500 7 6 6.500 6 9q1 3 6 2.500-2 2.500-5.500 2Q1 12.500.5 7z" fill="#1c74c4" />
  </svg>
);

const Calculator = () => (
  <svg viewBox="0 0 14 14" className="size-3.5">
    <path d="M1.500.5h11v13h-11z" fill="#5c6c78" />
    <path d="M2.500 1.500h9V4h-9z" fill="#9cdcf8" />
    <path d="M3 6h2v1.500H3zM6 6h2v1.500H6zM9 6h2v1.500H9zM3 8.500h2V10H3zM6 8.500h2V10H6zM3 11h2v1.500H3zM6 11h2v1.500H6z" fill="#e4e4e4" />
    <path d="M9 8.500h2v4H9z" fill="#3ca4e4" />
  </svg>
);

const Chess = () => (
  <svg viewBox="0 0 14 14" className="size-3.5">
    <path d="M0 0h14v14H0z" fill="#0c7c7c" />
    <path d="M3.500 9Q0 5 3 4t4 2.500Q8 3 11 4t-.5 5z" fill="#f4f4f4" stroke="#111" strokeWidth=".7" />
    <path d="M7 1.500v4M5.500 2.800h3M3.500 10h7v2h-7z" fill="#f4f4f4" stroke="#f4f4f4" />
    <path d="M3.500 9.500h7" stroke="#111" strokeWidth=".7" />
  </svg>
);

const TASKS: { name: string; art: ReactNode; mark?: "dot" | "active" | "alert" }[] = [
  { name: "Start", art: <Windows /> },
  { name: "Search", art: <Search size={14} stroke="#e8e8e8" className="-scale-x-100" /> },
  { name: "Chat", art: <Chat /> },
  { name: "Word", art: <Office letter="W" fill="#3c78c8" dark="#1c4c94" />, mark: "dot" },
  { name: "MetaStock", art: <Meta /> },
  { name: "Explorer", art: <Folder /> },
  { name: "Chrome", art: <Chrome badge />, mark: "dot" },
  { name: "PowerPoint", art: <Office letter="P" fill="#e0583c" dark="#d04424" /> },
  { name: "VLC", art: <Vlc /> },
  { name: "Edge", art: <Edge /> },
  { name: "Visio", art: <Office letter="V" fill="#4c70c0" dark="#3054a4" /> },
  { name: "Excel", art: <Office letter="X" fill="#309860" dark="#107c40" />, mark: "dot" },
  { name: "Chrome profile", art: <Chrome /> },
  { name: "Calculator", art: <Calculator /> },
  { name: "Chess", art: <Chess /> },
  { name: "MetaStock chart", art: <Meta />, mark: "active" },
  {
    name: "Pro",
    art: (
      <span className="flex size-3.5 items-end justify-center border border-[#9c1c30] bg-[#3a1218] pb-px text-[6px] leading-none text-[#c82840]">
        Pro
      </span>
    ),
    mark: "alert",
  },
];

const MARKS = {
  dot: "w-1 bg-[#999]",
  active: "w-[9px] bg-[#4cc2f4]",
  alert: "w-1 bg-[#f0a0a0]",
};

const TASK_BG = {
  dot: "",
  active: "bg-[#34323c]",
  alert: "bg-[#50242a]",
};

const Taskbar = () => (
  <nav className="grid h-[26px] grid-cols-[1fr_428px_1fr] items-center bg-[#23202a] text-[7px] leading-[9px] text-[#eee]">
    <div className="flex items-center gap-1 pl-3">
      <svg viewBox="0 0 14 14" className="size-3.5">
        <circle cx="6" cy="5.500" r="5" fill="#f4a020" />
        <path d="M4 13.500a3 3 0 0 1 .3-5.500 3.500 3.500 0 0 1 6 .5 2.500 2.500 0 0 1 .7 5z" fill="#cfe0f4" />
      </svg>
      <div>
        <p>21°C</p>
        <p className="text-[#c0c0c0]">Parc. Ensol</p>
      </div>
    </div>
    <div className="grid grid-cols-17">
      {TASKS.map((task) => (
        <button
          key={task.name}
          aria-label={task.name}
          className={`mx-px flex h-[23px] flex-col items-center justify-end gap-0.5 rounded-xs ${task.mark ? TASK_BG[task.mark] : ""}`}
        >
          {task.art}
          <span className={`mb-px h-px rounded-full ${task.mark ? MARKS[task.mark] : ""}`} />
        </button>
      ))}
    </div>
    <div className="flex items-center justify-end pr-[11px]">
      <ChevronUp size={10} className="mr-1" />
      <svg viewBox="0 0 10 10" className="mr-1 size-2.5">
        <path d="M2 7.500a2 2 0 0 1 0-4 3 3 0 0 1 5.500 0 2 2 0 0 1 1.500 2v2z" fill="#d8d8d8" />
        <circle cx="7.500" cy="7.500" r="2.500" fill="#e03030" />
      </svg>
      <span className="relative mr-1.5">
        <RefreshCw size={10} />
        <span className="absolute bottom-0 right-0 size-1 rounded-full bg-[#f89c18]" />
      </span>
      <Wifi size={10} className="mr-1" />
      <Volume2 size={10} className="mr-1" />
      <BatteryCharging size={11} className="mr-1.5" />
      <div className="mr-1 text-right">
        <p>18:35</p>
        <p>13/10/2022</p>
      </div>
      <span className="flex size-[9px] items-center justify-center rounded-full bg-[#4cc2f4] text-[6px] leading-none text-black">
        1
      </span>
    </div>
  </nav>
);

const MENU = ["File", "Edit", "View", "Insert", "Format", "Tools", "Window", "Help"];

const WindowButtons = ({ stroke, className }: { stroke: string; className: string }) => (
  <div className={`flex ${className}`}>
    {[
      ["Minimize", "M2 5.500h5"],
      ["Restore", "M3.500 1.500h4v3M1.500 3.500h4v3h-4z"],
      ["Close", "m2.500 2 4 4m0-4-4 4"],
    ].map(([label, d]) => (
      <button key={label} aria-label={label} className="flex flex-1 items-center justify-center">
        <svg viewBox="0 0 9 8" className="h-2 w-[9px]">
          <path d={d} fill="none" stroke={stroke} strokeWidth="1.200" />
        </svg>
      </button>
    ))}
  </div>
);

const TitleBar = () => (
  <header className="grid h-[13px] grid-cols-[1fr_auto_1fr] items-center bg-linear-to-b from-[#555] to-[#303030] text-[7px] leading-none text-[#dcdcdc]">
    <div className="flex self-start pl-0.5">
      <svg viewBox="0 0 4 6" className="h-1.5 w-1">
        <path d="M0 6 2 1v5zM2.500 6 4 0v6z" fill="#f07818" />
      </svg>
      <h1 className="text-[9px] leading-[9px] text-white">MetaStock</h1>
    </div>
    <p className="whitespace-pre pl-16">
      [SPY Nova Maquineta 1H.mwc - [SPY] SPDR S&amp;P 500 (Trade Price)]{"  "}366.250 (+3.31000)
    </p>
    <div className="flex items-center justify-end pr-1">
      <span className="mr-1.5">Hourly</span>
      <WindowButtons stroke="#ddd" className="h-2 w-[39px] bg-[#333]" />
    </div>
  </header>
);

export default function App() {
  return (
    <div className="min-w-[880px] bg-[#efefef] font-[Roboto,sans-serif]">
      <TitleBar />
      <div className="flex h-3 items-center bg-[#eaeaea] pl-1 text-[7px] leading-none text-[#333]">
        <nav className="flex gap-1.5">
          {MENU.map((name) => (
            <button key={name}>
              <span className="underline">{name[0]}</span>
              {name.slice(1)}
            </button>
          ))}
        </nav>
        <WindowButtons stroke="#456" className="ml-auto mr-1.5 h-2 w-7 bg-[#cfe0ea]" />
      </div>
      <Toolbar />
      <div className="flex">
        <SideBar />
        <Charts />
      </div>
      <FormatBar />
      <StatusBar />
      <Taskbar />
    </div>
  );
}
